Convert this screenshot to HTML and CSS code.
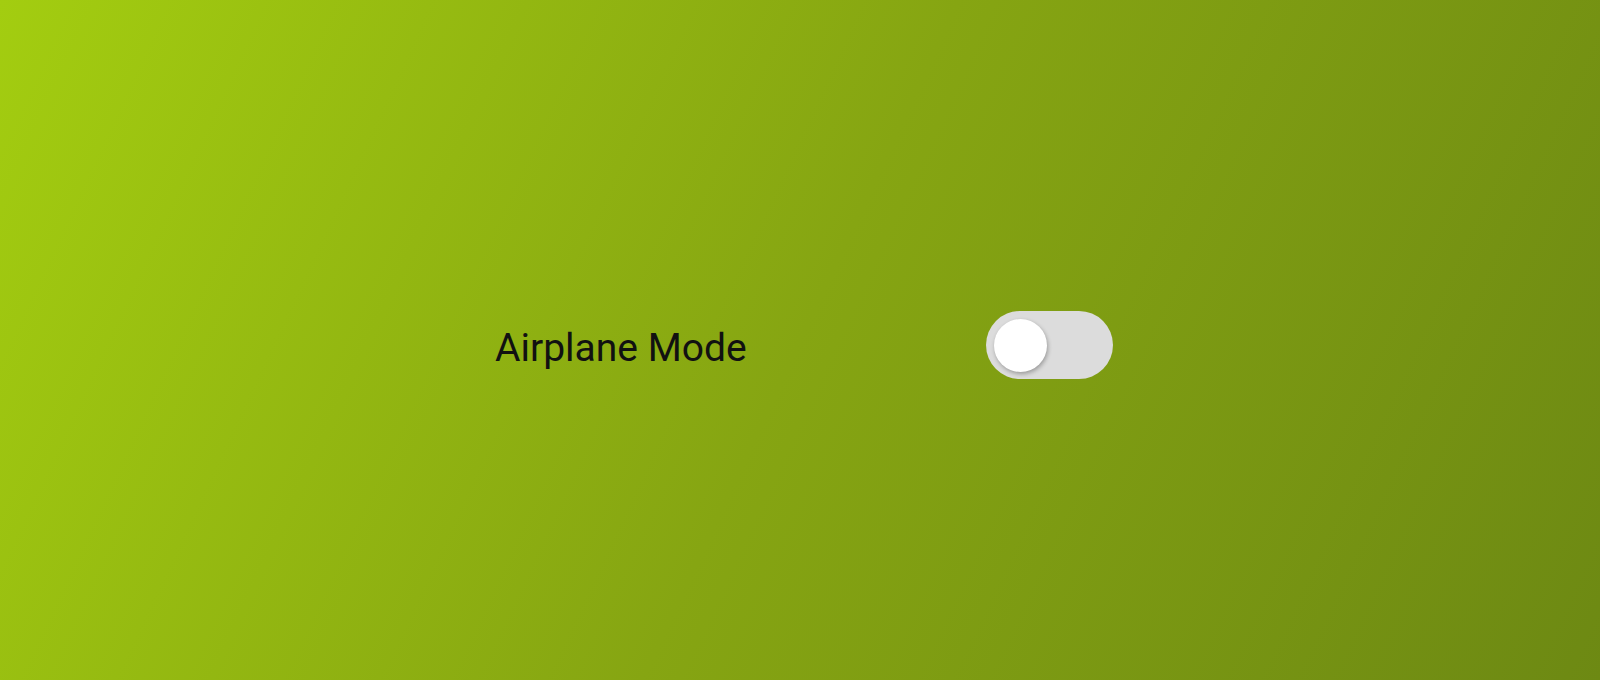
FILE: index.html
```html
<!DOCTYPE html>
<html lang="en">
<head>
  <meta charset="UTF-8">
  <meta name="viewport" content="width=device-width, initial-scale=1.0">
  <title>Airplane Mode</title>
  <link rel="stylesheet" href="styles.css">
</head>
<body>
  <div class="setting">
    <label for="airplane" class="setting-label">Airplane Mode</label>
    <label class="switch">
      <input type="checkbox" id="airplane">
      <span class="track"><span class="knob"></span></span>
    </label>
  </div>
</body>
</html>
```

FILE: styles.css
```css
html, body {
  height: 100%;
}
body {
  margin: 0;
  font-family: Roboto, "Liberation Sans", sans-serif;
  background: linear-gradient(115deg, #a3cd10 0%, #86a512 50%, #6d8913 100%);
  display: flex;
  align-items: center;
  justify-content: center;
}
.setting {
  width: 618px;
  margin-left: 8px;
  margin-top: 10px;
  display: flex;
  align-items: center;
  justify-content: space-between;
}
.setting-label {
  font-size: 39px;
  color: #111;
  padding-top: 6px;
}
.switch input {
  display: none;
}
.track {
  display: flex;
  align-items: center;
  width: 127px;
  height: 68px;
  padding: 0 8px;
  box-sizing: border-box;
  border-radius: 34px;
  background: #dcdcdc;
  cursor: pointer;
}
.knob {
  width: 53px;
  height: 53px;
  border-radius: 50%;
  background: #fff;
  box-shadow: 1px 2px 4px rgba(0,0,0,0.3);
}
```
